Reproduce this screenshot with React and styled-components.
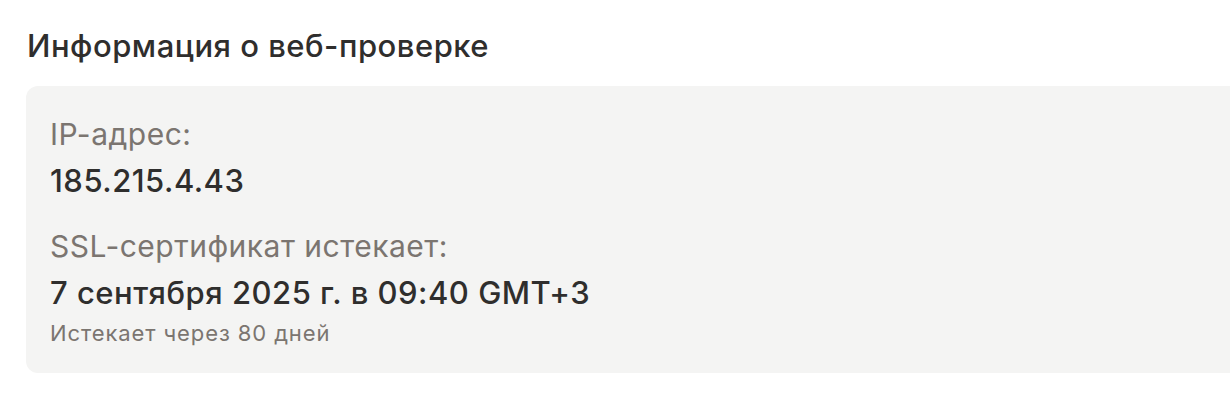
import React from "react";
import styled, { createGlobalStyle } from "styled-components";

const GlobalStyle = createGlobalStyle`
  html, body {
    margin: 0;
    padding: 0;
    background: #ffffff;
    overflow: hidden;
  }
  body {
    font-family: Inter, "Noto Sans", "Liberation Sans", sans-serif;
    -webkit-font-smoothing: antialiased;
  }
`;

const Page = styled.div`
  padding: 26px 0 0 26px;
`;

const Title = styled.h2`
  margin: 0 0 20px 1px;
  font-size: 31px;
  line-height: 40px;
  font-weight: 500;
  letter-spacing: 0.5px;
  color: #2f2e2d;
`;

const Card = styled.div`
  width: 1220px;
  box-sizing: border-box;
  background: #f4f4f3;
  border-radius: 12px;
  padding: 30px 24px 27px;
  display: flex;
  flex-direction: column;
  gap: 29px;
`;

const Field = styled.div`
  display: flex;
  flex-direction: column;
  gap: 11px;
`;

const Label = styled.div`
  font-size: 30px;
  line-height: 36px;
  font-weight: 400;
  letter-spacing: 0.5px;
  color: #7b7570;
`;

const Value = styled.div`
  font-size: 31px;
  line-height: 36px;
  font-weight: 500;
  letter-spacing: 0.5px;
  color: #2f2e2d;
`;

const Note = styled.div`
  margin-top: -2px;
  font-size: 22px;
  line-height: 26px;
  letter-spacing: 0.9px;
  color: #7b7570;
`;

const fields = [
  { label: "IP-адрес:", value: "185.215.4.43" },
  {
    label: "SSL-сертификат истекает:",
    value: "7 сентября 2025 г. в 09:40 GMT+3",
    note: "Истекает через 80 дней",
  },
];

export default function App() {
  return (
    <>
      <GlobalStyle />
      <Page>
        <Title>Информация о веб-проверке</Title>
        <Card>
          {fields.map((f) => (
            <Field key={f.label}>
              <Label>{f.label}</Label>
              <Value>{f.value}</Value>
              {f.note && <Note>{f.note}</Note>}
            </Field>
          ))}
        </Card>
      </Page>
    </>
  );
}
